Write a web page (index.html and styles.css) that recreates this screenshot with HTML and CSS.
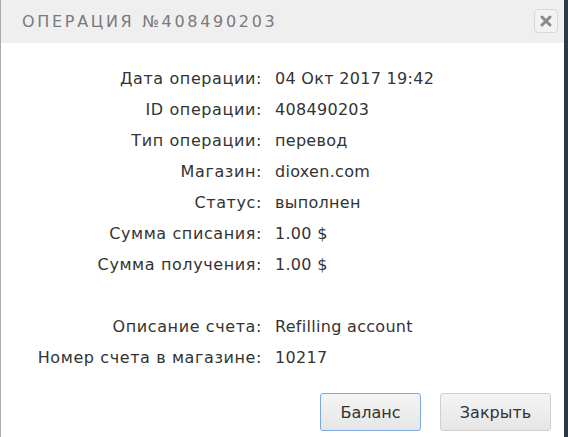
FILE: index.html
```html
<!DOCTYPE html>
<html lang="ru">
<head>
<meta charset="utf-8">
<link rel="stylesheet" href="styles.css">
</head>
<body>
<div class="modal">
  <div class="modal-header">
    <h2 class="title">Операция №408490203</h2>
    <button class="close" aria-label="close">
      <svg width="12" height="12" viewBox="0 0 12 12"><path d="M2 2 L10 10 M10 2 L2 10" stroke="#8a8a8a" stroke-width="3" stroke-linecap="round"/></svg>
    </button>
  </div>
  <div class="modal-body">
    <dl class="info">
      <dt>Дата операции:</dt><dd>04 Окт 2017 19:42</dd>
      <dt>ID операции:</dt><dd>408490203</dd>
      <dt>Тип операции:</dt><dd>перевод</dd>
      <dt>Магазин:</dt><dd>dioxen.com</dd>
      <dt>Статус:</dt><dd>выполнен</dd>
      <dt>Сумма списания:</dt><dd>1.00 $</dd>
      <dt>Сумма получения:</dt><dd>1.00 $</dd>
      <dt class="spacer"></dt><dd class="spacer"></dd>
      <dt>Описание счета:</dt><dd>Refilling account</dd>
      <dt>Номер счета в магазине:</dt><dd>10217</dd>
    </dl>
  </div>
  <div class="modal-footer">
    <button class="btn btn-focus">Баланс</button>
    <button class="btn">Закрыть</button>
  </div>
</div>
</body>
</html>
```
FILE: styles.css
```css
html, body {
  margin: 0;
  padding: 0;
  height: 100%;
}
body {
  background: #2c3b43;
  overflow: hidden;
}
.modal {
  width: 563px;
  height: 437px;
  background: #fff;
  border-left: 1px solid #a9a9a9;
  display: flex;
  flex-direction: column;
  font-family: "DejaVu Sans", sans-serif;
}
.modal-header {
  height: 43px;
  background: #efefef;
  display: flex;
  align-items: center;
  justify-content: space-between;
  padding: 0 6px 0 21px;
}
.title {
  margin: 0;
  font-family: "DejaVu Sans", sans-serif;
  font-weight: normal;
  font-size: 16px;
  letter-spacing: 2.7px;
  text-transform: uppercase;
  color: #7a7a7a;
}
.close {
  width: 24px;
  height: 24px;
  margin-top: -1px;
  border: 1px solid #d8d8d8;
  border-radius: 4px;
  background: #f2f2f2;
  padding: 0;
  display: flex;
  align-items: center;
  justify-content: center;
}
.modal-body {
  padding-top: 20px;
}
.info {
  margin: 0;
  display: grid;
  grid-template-columns: 261px 1fr;
  column-gap: 13px;
  grid-auto-rows: 31px;
  font-size: 16px;
  letter-spacing: 0.6px;
  color: #333;
  align-items: center;
}
.info dt {
  text-align: right;
}
.info dd {
  margin: 0;
  letter-spacing: 0.3px;
}
.modal-footer {
  display: flex;
  justify-content: flex-end;
  gap: 19px;
  padding: 20px 13px 0 0;
}
.btn {
  height: 38px;
  padding: 0;
  border: 1px solid #cfcfcf;
  border-radius: 3px;
  background: linear-gradient(#f4f4f4, #e6e6e6);
  font-family: "DejaVu Sans", sans-serif;
  font-size: 16px;
  color: #333;
}
.btn-focus {
  border-color: #7da6e3;
  width: 101px;
}
.btn:not(.btn-focus) {
  width: 111px;
}
```
